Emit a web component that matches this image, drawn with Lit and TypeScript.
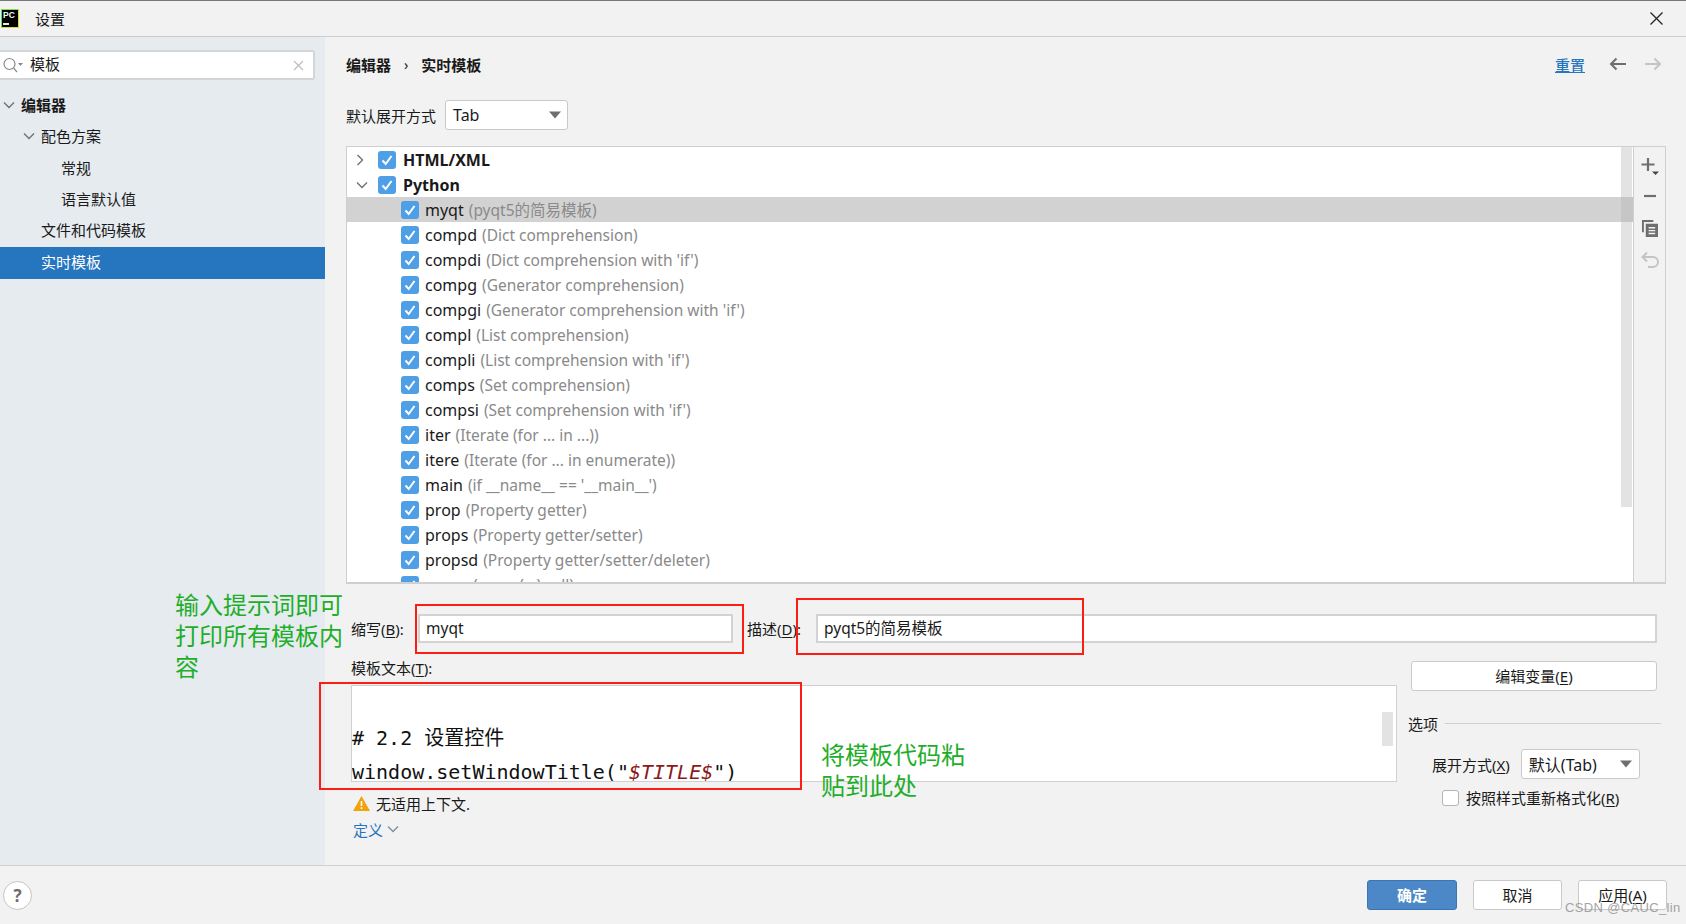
import { LitElement, html, css } from "lit";
import { customElement } from "lit/decorators.js";

const ITEMS: [string, string][] = [
  ["myqt", "(pyqt5的简易模板)"],
  ["compd", "(Dict comprehension)"],
  ["compdi", "(Dict comprehension with 'if')"],
  ["compg", "(Generator comprehension)"],
  ["compgi", "(Generator comprehension with 'if')"],
  ["compl", "(List comprehension)"],
  ["compli", "(List comprehension with 'if')"],
  ["comps", "(Set comprehension)"],
  ["compsi", "(Set comprehension with 'if')"],
  ["iter", "(Iterate (for ... in ...))"],
  ["itere", "(Iterate (for ... in enumerate))"],
  ["main", "(if __name__ == '__main__')"],
  ["prop", "(Property getter)"],
  ["props", "(Property getter/setter)"],
  ["propsd", "(Property getter/setter/deleter)"],
  ["super", "(super(...) call)"],
];

const chevDown = (c = "#6e6e6e") => html`<svg width="12" height="8" viewBox="0 0 12 8"><path d="M1 1.500 6 6.500 11 1.500" fill="none" stroke=${c} stroke-width="1.3"/></svg>`;
const chevRight = html`<svg width="8" height="12" viewBox="0 0 8 12"><path d="M1.500 1 6.500 6 1.500 11" fill="none" stroke="#6e6e6e" stroke-width="1.3"/></svg>`;
const check = html`<svg class="cb" width="18" height="18" viewBox="0 0 18 18"><rect width="18" height="18" rx="3" fill="#4f9fe6"/><path d="M4.500 9.500 7.700 13 13.500 5" fill="none" stroke="#fff" stroke-width="2"/></svg>`;
const caret = html`<svg width="14" height="8" viewBox="0 0 14 8"><path d="M1 0.500h12L7 7.500z" fill="#6e6e6e"/></svg>`;

@customElement("app-root")
export class AppRoot extends LitElement {
  static styles = css`
    :host { display: flex; flex-direction: column; width: 1686px; height: 924px; position: relative; overflow: hidden; background: #f2f2f2; color: #1a1a1a;
      font-family: "Noto Sans", "Noto Sans CJK SC", sans-serif; font-size: 15px; }
    * { box-sizing: border-box; }
    .titlebar { height: 37px; flex: none; display: flex; align-items: center; border-top: 1px solid #777; border-bottom: 1px solid #ccc; padding: 0 23px 0 1px; background: #f2f2f2; }
    .logo { width: 18px; height: 19px; background: #000; border: 1.500px solid #d7e023; border-left-color: #5fd96a; border-top-color: #7fdc55; margin-right: 16px; color: #eafff2; font: 700 8.500px/9px "Liberation Sans", sans-serif; padding: 1px 0 0 1px; display: flex; flex-direction: column; }
    .logo i { width: 6px; height: 1.500px; background: #e8e8e8; margin-top: 3px; }
    .title { flex: 1; font-size: 15px; }
    .body { flex: 1; display: flex; min-height: 0; }
    .side { width: 325px; flex: none; background: #e6ebf0; padding-top: 13px; }
    .search { width: 315px; height: 30px; background: #fff; border: 2px solid #d3d5d7; border-left: none; border-radius: 0 3px 3px 0; display: flex; align-items: center; padding: 0 9px 0 2px; gap: 7px; }
    .search span { flex: 1; font-size: 15px; line-height: 20px; margin-top: -2px; }
    .tree { margin-top: 9px; }
    .node { height: 31.3px; display: flex; align-items: center; font-size: 15px; }
    .node svg { margin-right: 6px; flex: none; }
    .node.bold { font-weight: 700; padding-left: 3px; }
    .node.l1 { padding-left: 41px; }
    .node.l1c { padding-left: 23px; }
    .node.l2 { padding-left: 61px; }
    .node.sel { background: #2675bf; color: #fff; height: 32px; margin-top: 2px; padding-bottom: 4px; }
    .main { flex: 1; min-width: 0; padding: 13px 20px 0 21px; display: flex; flex-direction: column; }
    .crumbs { height: 30px; display: flex; align-items: center; font-size: 15px; font-weight: 700; gap: 13px; padding-bottom: 2px; }
    .crumbs .sep { font-weight: 400; font-size: 14px; }
    .crumbs .spacer { flex: 1; }
    .reset { color: #2675bf; text-decoration: underline; font-weight: 500; margin-right: 11px; }
    .arrows { display: flex; gap: 17px; margin-right: 4px; }
    .expand { margin-top: 20px; height: 30px; display: flex; align-items: center; gap: 9px; font-size: 15px; }
    .combo { height: 30px; background: #fff; border: 1px solid #c9c9c9; border-radius: 3px; display: flex; align-items: center; justify-content: space-between; padding: 0 5px 0 7px; font-size: 16px; }
    .combo.a { width: 123px; }
    .combo.b { width: 119px; padding-right: 6px; }
    .listbox { margin-top: 16px; height: 438px; display: flex; border: 1px solid #cfcfcf; border-bottom-width: 2px; }
    .list { flex: 1; min-width: 0; background: #fff; overflow: hidden; position: relative; }
    .row { height: 25px; display: flex; align-items: center; font-size: 16px; white-space: nowrap; }
    .row.top { padding-left: 9px; font-weight: 700; }
    .row.top .ch { width: 22px; display: flex; }
    .row.top .cb { margin-right: 7px; }
    .row.item { padding-left: 54px; }
    .row.item .cb { margin-right: 6px; flex: none; }
    .row.hl { background: #d2d2d2; }
    .desc { color: #8a8a8a; margin-left: 5px; font-size: 15.500px; }
    .track { position: absolute; right: 1px; top: 0; width: 11px; height: 360px; background: #e3e3e3; }
    .track.tint { top: 50px; height: 25px; background: #c6c6c6; right: 0; width: 12px; }
    .tools { width: 32px; flex: none; border-left: 1px solid #cfcfcf; display: flex; flex-direction: column; align-items: center; padding: 1px 0 0 0; }
    .tool { height: 32px; display: flex; align-items: center; justify-content: center; }
    .tool.plus { padding-top: 4px; }
    .tools svg { display: block; }
    .fields { margin-top: 30px; height: 29px; display: flex; align-items: center; padding: 0 9px 0 5px; font-size: 15px; }
    .fl { flex: none; white-space: nowrap; }
    .fl.a { width: 67px; }
    .fl.b { width: 69px; }
    .input { height: 29px; background: #fff; border: 2px solid #d3d3d3; display: flex; align-items: center; padding: 0 5px 2px 6px; font-size: 15.500px; }
    .input.a { width: 315px; margin-right: 14px; }
    .input.b { flex: 1; }
    u { text-underline-offset: 2px; }
    .lower { margin-top: 14px; flex: 1; display: flex; padding: 1px 9px 0 5px; gap: 14px; }
    .left { width: 1046px; flex: none; }
    .lbl { height: 20px; font-size: 15px; line-height: 20px; }
    .editor { margin-top: 7px; height: 97px; background: #fff; border: 1px solid #d0d0d0; position: relative; font: 20px/34px "DejaVu Sans Mono", "Noto Sans CJK SC", monospace; color: #111; padding-top: 35px; white-space: pre; overflow: hidden; }
    .editor .var { color: #8b1a1a; font-style: italic; }
    .editor .sb { position: absolute; right: 3px; top: 26px; width: 11px; height: 34px; background: #e3e3e3; }
    .warn { margin-top: 11px; height: 20px; display: flex; align-items: center; gap: 6px; font-size: 15px; padding-left: 2px; }
    .def { margin-top: 6px; height: 20px; display: flex; align-items: center; gap: 4px; color: #2675bf; font-size: 15px; padding-left: 2px; }
    .right { flex: 1; min-width: 0; padding-top: 3px; }
    .btn { height: 30px; background: #fff; border: 1px solid #c9c9c9; border-radius: 3px; display: flex; align-items: center; justify-content: center; font-size: 15px; padding-bottom: 2px; }
    .group { margin-top: 22px; margin-left: -3px; margin-right: -4px; height: 20px; display: flex; align-items: center; gap: 7px; font-size: 15px; }
    .group i { flex: 1; height: 1px; background: #d0d0d0; }
    .opt { margin-top: 16px; display: flex; align-items: center; gap: 11px; padding-left: 21px; font-size: 15px; }
    .chk { margin-top: 8px; display: flex; align-items: center; gap: 7px; padding-left: 31px; font-size: 15px; }
    .box { width: 17px; height: 16px; background: #fff; border: 1px solid #b5b5b5; border-radius: 3px; }
    .footer { height: 59px; flex: none; border-top: 1px solid #d0d0d0; display: flex; align-items: center; padding: 0 19px 0 3px; gap: 16px; }
    .help { width: 29px; height: 29px; border-radius: 50%; background: #fff; border: 1px solid #c4c4c4; display: flex; align-items: center; justify-content: center; font-weight: 700; color: #6e6e6e; font-size: 17px; margin-right: auto; }
    .fbtn { width: 89px; height: 30px; background: #fff; border: 1px solid #c9c9c9; border-radius: 3px; display: flex; align-items: center; justify-content: center; font-size: 15px; padding-bottom: 1px; }
    .fbtn.primary { width: 90px; background: #4c88c7; border-color: #3b76b4; color: #fff; font-weight: 700; }
    .mark { position: absolute; border: 2px solid #fb1e14; pointer-events: none; }
    .m1 { left: 415px; top: 604px; width: 329px; height: 50px; }
    .m2 { left: 796px; top: 598px; width: 288px; height: 57px; }
    .m3 { left: 319px; top: 682px; width: 483px; height: 108px; }
    .note { position: absolute; color: #1fae2a; font-size: 24px; line-height: 31px; white-space: pre; }
    .n1 { left: 175px; top: 589px; }
    .n2 { left: 821px; top: 739px; }
    .wm { position: absolute; left: 1565px; top: 900px; font: 13px/16px "Liberation Sans", sans-serif; color: #9a9a9a; opacity: .9; letter-spacing: .35px; }
  `;

  render() {
    return html`
      <div class="titlebar">
        <div class="logo">PC<i></i></div>
        <div class="title">设置</div>
        <svg width="13" height="13" viewBox="0 0 13 13"><path d="M.5.500 12.500 12.500M12.500.500 .500 12.500" stroke="#222" stroke-width="1.300"/></svg>
      </div>
      <div class="body">
        <aside class="side">
          <div class="search">
            <svg width="21" height="18" viewBox="0 0 21 18"><circle cx="7.500" cy="8" r="5.500" fill="none" stroke="#8a8a8a" stroke-width="1.200"/><path d="M11.500 12 15 16" stroke="#8a8a8a" stroke-width="1.200"/><path d="M16 7h5l-2.500 3z" fill="#8a8a8a"/></svg>
            <span>模板</span>
            <svg width="11" height="11" viewBox="0 0 11 11"><path d="M1 1 10 10M10 1 1 10" stroke="#bdbdbd" stroke-width="1.200"/></svg>
          </div>
          <div class="tree">
            <div class="node bold">${chevDown()}编辑器</div>
            <div class="node l1c">${chevDown()}配色方案</div>
            <div class="node l2">常规</div>
            <div class="node l2">语言默认值</div>
            <div class="node l1">文件和代码模板</div>
            <div class="node l1 sel">实时模板</div>
          </div>
        </aside>
        <main class="main">
          <div class="crumbs">
            <span>编辑器</span><span class="sep">›</span><span>实时模板</span><span class="spacer"></span>
            <span class="reset">重置</span>
            <div class="arrows">
              <svg width="18" height="14" viewBox="0 0 18 14"><path d="M17 7H2M7.500 1.500 2 7l5.500 5.500" fill="none" stroke="#6e6e6e" stroke-width="2"/></svg>
              <svg width="18" height="14" viewBox="0 0 18 14"><path d="M1 7h15M10.500 1.500 16 7l-5.500 5.500" fill="none" stroke="#c4c4c4" stroke-width="2"/></svg>
            </div>
          </div>
          <div class="expand"><span>默认展开方式</span><div class="combo a"><span>Tab</span>${caret}</div></div>
          <div class="listbox">
            <div class="list">
              <div class="row top"><span class="ch">${chevRight}</span>${check}HTML/XML</div>
              <div class="row top"><span class="ch">${chevDown()}</span>${check}Python</div>
              ${ITEMS.map(([n, d], i) => html`<div class="row item ${i === 0 ? "hl" : ""}">${check}<span>${n}</span><span class="desc">${d}</span></div>`)}
              <div class="track"></div>
              <div class="track tint"></div>
            </div>
            <div class="tools">
              <div class="tool plus"><svg width="20" height="20" viewBox="0 0 20 20"><path d="M8 2v13M1.500 8.500h13" stroke="#6e6e6e" stroke-width="2.200"/><path d="M12 15.500h7l-3.500 3.500z" fill="#444"/></svg></div>
              <div class="tool"><svg width="14" height="14" viewBox="0 0 14 14"><path d="M1 7h12" stroke="#6e6e6e" stroke-width="2.200"/></svg></div>
              <div class="tool"><svg width="16" height="17" viewBox="0 0 17 18"><path d="M0 0h12v2H2v11H0z" fill="#6e6e6e"/><path fill-rule="evenodd" d="M4 4h13v14H4zM7 7.500v1.500h7V7.500zM7 10.500V12h7v-1.500zM7 13.500V15h7v-1.500z" fill="#6e6e6e"/></svg></div>
              <div class="tool"><svg width="18" height="18" viewBox="0 0 18 18"><path d="M6 1.500 1.500 6 6 10.500M2 6h10a4.500 4.500 0 0 1 0 10H7" fill="none" stroke="#c4c4c4" stroke-width="2"/></svg></div>
            </div>
          </div>
          <div class="fields">
            <span class="fl a">缩写(<u>B</u>):</span>
            <div class="input a">myqt</div>
            <span class="fl b">描述(<u>D</u>):</span>
            <div class="input b">pyqt5的简易模板</div>
          </div>
          <div class="lower">
            <div class="left">
              <div class="lbl">模板文本(<u>T</u>):</div>
              <div class="editor"><div># 2.2 设置控件</div><div>window.setWindowTitle("<span class="var">$TITLE$</span>")</div><div class="sb"></div></div>
              <div class="warn">
                <svg width="17" height="15" viewBox="0 0 17 15"><path d="M8.500 0 17 15H0z" fill="#f0a30a"/><path d="M8.500 5v5M8.500 11.200v1.800" stroke="#fff" stroke-width="1.600"/></svg>
                <span>无适用上下文.</span>
              </div>
              <div class="def"><span>定义</span>${chevDown("#7b8ea3")}</div>
            </div>
            <div class="right">
              <div class="btn"><span>编辑变量(<u>E</u>)</span></div>
              <div class="group"><span>选项</span><i></i></div>
              <div class="opt"><span>展开方式(<u>X</u>)</span><div class="combo b"><span>默认(Tab)</span>${caret}</div></div>
              <div class="chk"><div class="box"></div><span>按照样式重新格式化(<u>R</u>)</span></div>
            </div>
          </div>
        </main>
      </div>
      <footer class="footer">
        <div class="help">?</div>
        <div class="fbtn primary">确定</div>
        <div class="fbtn">取消</div>
        <div class="fbtn"><span>应用(<u>A</u>)</span></div>
      </footer>
      <div class="mark m1"></div>
      <div class="mark m2"></div>
      <div class="mark m3"></div>
      <div class="note n1">输入提示词即可
打印所有模板内
容</div>
      <div class="note n2">将模板代码粘
贴到此处</div>
      <div class="wm">CSDN @CAUC_lin</div>
    `;
  }
}
